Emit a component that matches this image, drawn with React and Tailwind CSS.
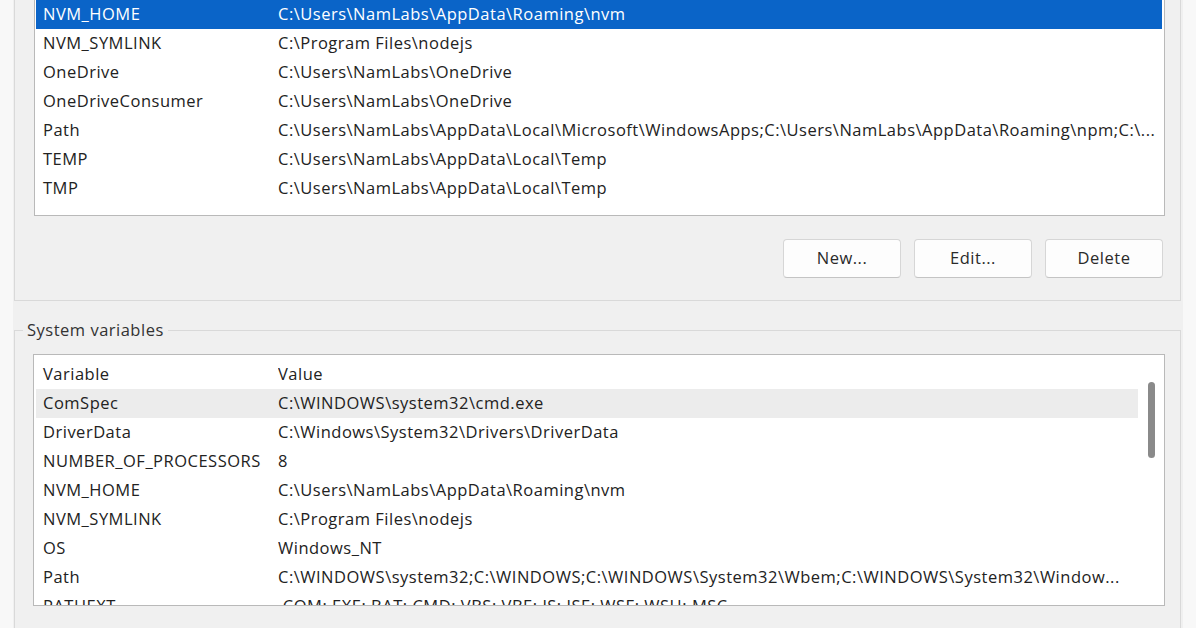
import React from 'react';

const userVars = [
  { name: 'NVM_HOME', value: 'C:\\Users\\NamLabs\\AppData\\Roaming\\nvm', selected: true },
  { name: 'NVM_SYMLINK', value: 'C:\\Program Files\\nodejs' },
  { name: 'OneDrive', value: 'C:\\Users\\NamLabs\\OneDrive' },
  { name: 'OneDriveConsumer', value: 'C:\\Users\\NamLabs\\OneDrive' },
  { name: 'Path', value: 'C:\\Users\\NamLabs\\AppData\\Local\\Microsoft\\WindowsApps;C:\\Users\\NamLabs\\AppData\\Roaming\\npm;C:\\...' },
  { name: 'TEMP', value: 'C:\\Users\\NamLabs\\AppData\\Local\\Temp' },
  { name: 'TMP', value: 'C:\\Users\\NamLabs\\AppData\\Local\\Temp' },
];

const systemVars = [
  { name: 'ComSpec', value: 'C:\\WINDOWS\\system32\\cmd.exe', hover: true },
  { name: 'DriverData', value: 'C:\\Windows\\System32\\Drivers\\DriverData' },
  { name: 'NUMBER_OF_PROCESSORS', value: '8' },
  { name: 'NVM_HOME', value: 'C:\\Users\\NamLabs\\AppData\\Roaming\\nvm' },
  { name: 'NVM_SYMLINK', value: 'C:\\Program Files\\nodejs' },
  { name: 'OS', value: 'Windows_NT' },
  { name: 'Path', value: 'C:\\WINDOWS\\system32;C:\\WINDOWS;C:\\WINDOWS\\System32\\Wbem;C:\\WINDOWS\\System32\\Window...' },
  { name: 'PATHEXT', value: '.COM;.EXE;.BAT;.CMD;.VBS;.VBE;.JS;.JSE;.WSF;.WSH;.MSC' },
];

const Row = ({ name, value, selected, hover }) => (
  <div
    className={
      'flex items-center h-[29px] shrink-0 whitespace-nowrap ' +
      (selected ? 'bg-[#0a64c8] text-white' : hover ? 'bg-[#ececec]' : '')
    }
  >
    <div className="w-[242px] pl-[7px] shrink-0">{name}</div>
    <div className="flex-1 overflow-hidden">{value}</div>
  </div>
);

const WinButton = ({ children }) => (
  <button className="w-[118px] h-[39px] bg-[#fdfdfd] border border-[#d6d6d6] border-b-[#c4c4c4] rounded-[4px] text-[#2a2a2a]">
    {children}
  </button>
);

export default function App() {
  return (
    <div
      className="w-[1196px] h-[628px] overflow-hidden flex bg-[#f0f0f0] text-[16.5px] tracking-[0.5px] text-[#222]"
      style={{ fontFamily: '"Open Sans", "Noto Sans", sans-serif' }}
    >
      <div className="w-[13px] shrink-0 bg-[#f8f8f8]" />

      <div className="flex-1 flex flex-col">
        {/* User variables group (top cut off) */}
        <div className="ml-[1px] mr-[2px] h-[301px] shrink-0 border-x border-b border-[#d9d9d9] flex flex-col pl-[19px] pr-[15px]">
          <div className="h-[216px] bg-white border-x border-b border-[#b9b9b9] flex flex-col pl-[1px] pr-[2px]">
            {userVars.map((v) => (
              <Row key={v.name} {...v} />
            ))}
          </div>
          <div className="mt-[23px] flex justify-end gap-[13px] pr-[2px]">
            <WinButton>New...</WinButton>
            <WinButton>Edit...</WinButton>
            <WinButton>Delete</WinButton>
          </div>
        </div>

        {/* System variables group */}
        <div className="relative mt-[29px] ml-[1px] mr-[2px] flex-1 border-x border-t border-[#d9d9d9] pl-[18px] pr-[15px] pt-[23px]">
          <div className="absolute -top-[12px] left-[8px] px-[4px] h-[22px] leading-[22px] bg-[#f0f0f0] text-[#333]">
            System variables
          </div>
          <div className="h-[252px] bg-white border border-[#b9b9b9] flex overflow-hidden">
            <div className="flex-1 flex flex-col pl-[2px] pt-[5px]">
              <Row name="Variable" value="Value" />
              {systemVars.map((v) => (
                <Row key={v.name} {...v} />
              ))}
            </div>
            <div className="w-[26px] shrink-0">
              <div className="ml-[10px] mt-[27px] w-[7px] h-[76px] rounded-full bg-[#8a8a8a]" />
            </div>
          </div>
        </div>
      </div>

      <div className="w-[13px] shrink-0 bg-[#f8f8f8]" />
    </div>
  );
}
